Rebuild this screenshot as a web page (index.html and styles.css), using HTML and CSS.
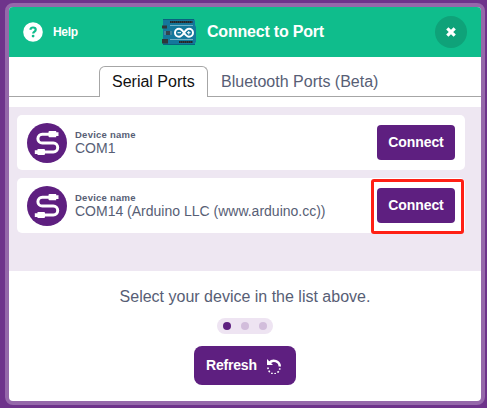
FILE: index.html
```html
<!DOCTYPE html>
<html lang="en">
<head>
<meta charset="utf-8">
<title>Connect to Port</title>
<link rel="stylesheet" href="styles.css">
</head>
<body>
<svg class="defs" width="0" height="0">
  <symbol id="cable" viewBox="0 0 40 40">
    <circle cx="20" cy="20" r="20" fill="#5e1f80"/>
    <path d="M23 11.300h-7.700a4.400 4.400 0 0 0 0 8.800h11a4.400 4.400 0 0 1 0 8.800H16" fill="none" stroke="#fff" stroke-width="3"/>
    <path d="M21.500 9q0-1 1-1h6.700v1.300h2.300v3.700h-2.300v1.300h-6.700q-1 0-1-1zM18 27q0-1-1-1h-6.500v1.300H7.800v3.600h2.700v1.200H17q1 0 1-1z" fill="#fff"/>
  </symbol>
</svg>
<main class="modal">
  <header class="header">
    <div class="help">
      <svg width="20" height="20" viewBox="0 0 20 20"><circle cx="10" cy="10" r="9.800" fill="#fff"/><path d="M7.300 7.700C7.600 6.100 8.800 5.500 10 5.500c1.600 0 2.700.9 2.700 2.200 0 1.900-2.500 1.800-2.500 3.800" fill="none" stroke="#0fbd8c" stroke-width="2.200"/><circle cx="10.100" cy="14.100" r="1.400" fill="#0fbd8c"/></svg>
      <span>Help</span>
    </div>
    <div class="title">
      <svg width="34" height="27" viewBox="0 0 34 27">
        <path d="M1 0h31l1 2v4l1 2v15l-1 1v2H1z" fill="#14779b"/>
        <path d="M1 .5h31M1 25.500h32" stroke="#09627f"/>
        <path d="M8 2h22.500v2H8zM17 22h13.500v2H17z" fill="#20292c"/>
        <path d="M9 3h21M18 23h12" stroke="#555b5d" stroke-width=".7" stroke-dasharray="1 1"/>
        <path d="M0 6.500h5v3H0zM0 20h6v4.500H0z" fill="#303739"/>
        <path d="M4 12h4v4H4z" fill="#34444e"/><path d="M3 12v4M9 12v4" stroke="#72909d"/>
        <path d="M8 6.500h23M8 20.500h23" stroke="#8bc0cf" stroke-width=".8"/>
        <path d="M22 13.700c-2-3-3.300-4-5-4a4 4 0 0 0 0 8c1.700 0 3-1 5-4s3.300-4 5-4a4 4 0 0 1 0 8c-1.700 0-3-1-5-4z" fill="none" stroke="#fff" stroke-width="2"/>
        <path d="M15.500 13.700H19M25 13.700h3.500M26.750 12v3.500" stroke="#fff"/>
      </svg>
      <h1>Connect to Port</h1>
    </div>
    <button class="close" aria-label="Close"><svg width="12" height="12" viewBox="0 0 12 12"><path d="M2.300 2.300l7.400 7.400M9.700 2.300L2.300 9.700" stroke="#fff" stroke-width="3.200"/></svg></button>
  </header>
  <nav class="tabs">
    <div class="tab active"><span>Serial Ports</span></div>
    <div class="tab"><span>Bluetooth Ports (Beta)</span></div>
  </nav>
  <section class="list">
    <article class="device">
      <svg width="40" height="40"><use href="#cable"/></svg>
      <div class="info"><small>Device name</small><div class="name">COM1</div></div>
      <button class="connect">Connect</button>
    </article>
    <article class="device selected">
      <svg width="40" height="40"><use href="#cable"/></svg>
      <div class="info"><small>Device name</small><div class="name">COM14 (Arduino LLC (www.arduino.cc))</div></div>
      <button class="connect">Connect</button>
    </article>
  </section>
  <footer class="footer">
    <p>Select your device in the list above.</p>
    <div class="dots"><i class="on"></i><i></i><i></i></div>
    <button class="refresh"><span>Refresh</span>
      <svg width="16" height="16" viewBox="0 0 16 16"><path d="M3.500 4.800A5.900 5.900 0 0 1 13.800 8.500" fill="none" stroke="#fff" stroke-width="2.500"/><path d="M1 1v6h6z" fill="#fff"/><path d="M13.800 10.200A5.900 5.900 0 0 1 2 9.500" fill="none" stroke="#fff" stroke-width="1.600" stroke-dasharray="1.600 1.700"/></svg>
    </button>
  </footer>
</main>
</body>
</html>
```
FILE: styles.css
```css
*, *::before, *::after { box-sizing: border-box; }
body {
  margin: 0;
  height: 408px;
  padding: 3px 2px 3px 5px;
  overflow: hidden;
  background: #6e338b;
  font-family: "Liberation Sans", Arial, sans-serif;
  color: #575e75;
}
svg { display: block; flex: none; }
.defs { position: absolute; }
button { border: 0; padding: 0; color: #fff; font: bold 14px "Liberation Sans", Arial, sans-serif; background: #5e1f80; }
.modal {
  width: 480px;
  height: 402px;
  border: 4px solid #9568aa;
  border-radius: 8px;
  background: #fff;
  overflow: hidden;
}
.header {
  height: 50px;
  display: grid;
  grid-template-columns: 153px 1fr 46px;
  align-items: center;
  background: #0fbd8c;
  color: #fff;
}
.help { display: flex; align-items: center; gap: 10px; padding-left: 14px; font-size: 12px; font-weight: bold; letter-spacing: -0.3px; }
.title { display: flex; align-items: center; gap: 11px; }
h1 { margin: 0; font-size: 16px; font-weight: bold; letter-spacing: -0.2px; white-space: nowrap; }
.close { width: 32px; height: 32px; border-radius: 50%; display: grid; place-items: center; background: #0fa279; }
.tabs { display: flex; height: 40px; padding-top: 9px; }
.tabs::before, .tabs::after { content: ""; height: 31px; border-bottom: 1px solid #a6a6a6; }
.tabs::before { width: 90px; }
.tabs::after { flex: 1; }
.tab { height: 31px; padding: 0 12px 0 13px; font-size: 16px; line-height: 31px; border-bottom: 1px solid #a6a6a6; white-space: nowrap; }
.tab.active { width: 109px; padding-left: 12px; line-height: 30px; border: 1px solid #a6a6a6; border-bottom: 0; border-radius: 6px 6px 0 0; color: #111; }
.list { height: 164px; margin-top: 10px; padding: 8px; background: #eee7f2; display: flex; flex-direction: column; gap: 8px; }
.device { position: relative; width: 448px; height: 55px; padding: 0 10px; border-radius: 5px; background: #fff; display: flex; align-items: center; }
.info { flex: 1; margin-left: 8px; white-space: nowrap; }
.info small { display: block; font-size: 9.5px; line-height: 11px; font-weight: bold; letter-spacing: 0.25px; }
.name { font-size: 14px; line-height: 16px; }
.connect { width: 78px; height: 35px; padding-bottom: 2px; border-radius: 4px; letter-spacing: -0.1px; }
.selected::after { content: ""; position: absolute; left: 354px; top: 1px; width: 93px; height: 55px; border: 3px solid #ff2015; border-radius: 3px; }
.footer { display: flex; flex-direction: column; align-items: center; }
.footer p { margin: 16px 0 0; font-size: 16px; line-height: 20px; }
.dots { width: 56px; height: 16px; margin-top: 11px; border-radius: 8px; background: #eee4f2; display: flex; align-items: center; justify-content: center; gap: 10px; }
.dots i { width: 8px; height: 8px; border-radius: 50%; background: #d2bddb; }
.dots .on { background: #5e1f80; }
.refresh { width: 102px; height: 39px; margin-top: 12px; padding-left: 12px; border-radius: 8px; display: flex; align-items: center; gap: 9px; letter-spacing: -0.2px; }
.refresh span { padding-bottom: 1px; }
```
